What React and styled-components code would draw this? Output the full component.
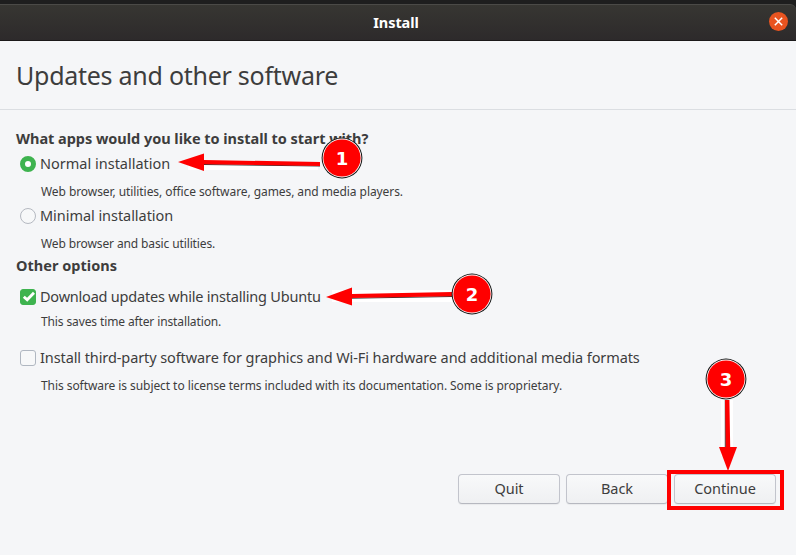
import React from "react";
import styled, { createGlobalStyle } from "styled-components";

const GlobalStyle = createGlobalStyle`
  * { box-sizing: border-box; }
  body { margin: 0; overflow: hidden; }
`;

const Window = styled.main`
  position: relative;
  width: 796px;
  height: 555px;
  display: flex;
  flex-direction: column;
  background: #f5f6f8;
  color: #3d3d3d;
  font-family: "Noto Sans", "Open Sans", sans-serif;
  font-size: 14.5px;
`;

const Desktop = styled.div`
  flex: none;
  background: #1e1e1e;
  padding-top: 4px;
`;

const TitleBar = styled.header`
  display: grid;
  grid-template-columns: 1fr auto 1fr;
  align-items: center;
  height: 37px;
  padding: 0 8px 1px 4px;
  background: linear-gradient(#373632, #2d2a2b);
  border-top: 1px solid #4b4a47;
  border-bottom: 1px solid #1b191a;
  border-top-right-radius: 6px;
`;

const WindowTitle = styled.span`
  grid-column: 2;
  color: #fff;
  font-weight: 700;
  letter-spacing: -0.05px;
`;

const CloseButton = styled.button`
  justify-self: end;
  display: grid;
  place-items: center;
  width: 19px;
  height: 19px;
  margin-bottom: 1px;
  padding: 0;
  border: 0;
  border-radius: 50%;
  background: #e95420;
`;

const PageHeader = styled.section`
  flex: none;
  display: flex;
  align-items: center;
  height: 69px;
  padding: 0 0 0 16px;
  border-bottom: 1px solid #dbdee2;
`;

const PageTitle = styled.h1`
  margin: 0;
  font-size: 25px;
  font-weight: 400;
  letter-spacing: -0.26px;
  line-height: 34px;
`;

const Form = styled.form`
  display: flex;
  flex-direction: column;
  padding: 17px 16px 0;
`;

const Heading = styled.h2`
  margin: 0;
  height: ${(p) => p.$height}px;
  font-size: 14.5px;
  font-weight: 700;
  line-height: 22px;
  letter-spacing: ${(p) => p.$tracking}px;
`;

const Option = styled.label`
  display: flex;
  align-items: center;
  gap: 4px;
  height: 24px;
  padding-left: 4px;
`;

const OptionText = styled.span`
  padding-bottom: 2px;
  white-space: nowrap;
  letter-spacing: ${(p) => p.$tracking}px;
`;

const Note = styled.p`
  margin: ${(p) => p.$before}px 0 ${(p) => p.$after}px 25px;
  font-size: 12px;
  line-height: 20px;
  white-space: nowrap;
  letter-spacing: ${(p) => p.$tracking}px;
`;

const Radio = styled.span`
  flex: none;
  width: 16px;
  height: 16px;
  border-radius: 50%;
  background: ${(p) => (p.$checked ? "#fff" : "#f7f8f9")};
  border: ${(p) => (p.$checked ? "5px solid #3eb34f" : "1px solid #b5b9c1")};
`;

const Checkbox = styled.span`
  flex: none;
  display: grid;
  place-items: center;
  width: 16px;
  height: 16px;
  border-radius: 3px;
  background: ${(p) => (p.$checked ? "#3eb34f" : "#f7f8f9")};
  border: 1px solid ${(p) => (p.$checked ? "#3eb34f" : "#b0b7c1")};
`;

const Actions = styled.footer`
  display: flex;
  justify-content: flex-end;
  gap: 6px;
  margin-top: auto;
  padding: 0 20px 51px;
`;

const Button = styled.button`
  width: 102px;
  height: 30px;
  padding: 0 0 2px;
  border: 1px solid #c2c4cc;
  border-bottom-color: #b6b8c0;
  border-radius: 4px;
  background: linear-gradient(#f8f9fa, #eff0f2);
  box-shadow: 0 1px 1px rgba(0, 0, 0, 0.05);
  color: inherit;
  font: inherit;
  letter-spacing: -0.05px;
`;

const Annotations = styled.svg`
  position: absolute;
  inset: 0;
  pointer-events: none;
`;

const Numeral = styled.text`
  fill: #fff;
  font: 700 18px "DejaVu Sans", sans-serif;
  text-anchor: middle;
`;

function Badge({ x, y, label }) {
  return (
    <g>
      <circle cx={x} cy={y} r="20.4" fill="#111" />
      <circle cx={x} cy={y} r="19.4" fill="#fff" />
      <circle cx={x} cy={y} r="18.6" fill="#f00" />
      <Numeral x={x} y={y + 7}>{label}</Numeral>
    </g>
  );
}

export default function App() {
  return (
    <Window>
      <GlobalStyle />
      <Desktop>
        <TitleBar>
          <WindowTitle>Install</WindowTitle>
          <CloseButton type="button" aria-label="Close">
            <svg width="19" height="19" viewBox="0 0 19 19">
              <path d="M5.8 5.8 13.2 13.2M13.2 5.8 5.8 13.2" stroke="#fff" strokeWidth="1.5" />
            </svg>
          </CloseButton>
        </TitleBar>
      </Desktop>
      <PageHeader>
        <PageTitle>Updates and other software</PageTitle>
      </PageHeader>
      <Form>
        <Heading $height={25} $tracking={-0.03}>What apps would you like to install to start with?</Heading>
        <Option>
          <Radio $checked />
          <OptionText $tracking={0}>Normal installation</OptionText>
        </Option>
        <Note $before={6} $after={2} $tracking={-0.073}>Web browser, utilities, office software, games, and media players.</Note>
        <Option>
          <Radio />
          <OptionText $tracking={-0.05}>Minimal installation</OptionText>
        </Option>
        <Note $before={6} $after={0} $tracking={-0.12}>Web browser and basic utilities.</Note>
        <Heading $height={31} $tracking={0.02}>Other options</Heading>
        <Option>
          <Checkbox $checked>
            <svg width="14" height="14" viewBox="0 0 14 14">
              <path d="M2.8 6.7 6.2 9.8 13 2.7" fill="none" stroke="#fff" strokeWidth="2.9" />
            </svg>
          </Checkbox>
          <OptionText $tracking={-0.21}>Download updates while installing Ubuntu</OptionText>
        </Option>
        <Note $before={3} $after={14} $tracking={-0.12}>This saves time after installation.</Note>
        <Option>
          <Checkbox />
          <OptionText $tracking={-0.095}>
            Install third-party software for graphics and Wi-Fi hardware and additional media formats
          </OptionText>
        </Option>
        <Note $before={6} $after={0} $tracking={-0.07}>This software is subject to license terms included with its documentation. Some is proprietary.</Note>
      </Form>
      <Actions>
        <Button type="button">Quit</Button>
        <Button type="button">Back</Button>
        <Button type="button">Continue</Button>
      </Actions>
      <Annotations width="796" height="555" viewBox="0 0 796 555">
        <path d="M188 164H318V170H188Z" fill="#fff" />
        <path d="M204 164.5 320 166" stroke="#333" />
        <path d="M178 162 204 153.5V160L320 162V166L204 164.3V171Z" fill="#f00" />
        <path d="M332 290H452V302H332Z" fill="#fff" />
        <path d="M352 298.2 452 296.5" stroke="#333" />
        <path d="M326 297 352 287.5V294L452 292V296.3L352 298V305.5Z" fill="#f00" />
        <path d="M721 400H733V456H721Z" fill="#fff" />
        <path d="M725.3 400V448" stroke="#333" />
        <path d="M728 471 719 447H725.8L725 400H729.4L730.2 447H737Z" fill="#f00" />
        <Badge x={342} y={158} label="1" />
        <Badge x={472} y={294} label="2" />
        <Badge x={726} y={379} label="3" />
        <rect x="669" y="472" width="113" height="36" fill="none" stroke="#f00" strokeWidth="4" />
      </Annotations>
    </Window>
  );
}
